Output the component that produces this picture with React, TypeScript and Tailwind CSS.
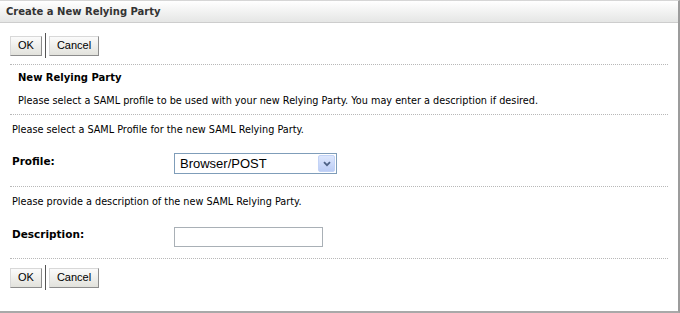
import React from 'react';

const font = { fontFamily: 'Tahoma, "DejaVu Sans", "Liberation Sans", sans-serif' };
const arial = { fontFamily: '"Liberation Sans", Arial, sans-serif' };

function ButtonBar() {
  return (
    <div className="flex items-center h-[25px] pl-[10px]" style={arial}>
      <button className="h-[20px] w-[32px] border border-[#8c8c8c] border-t-[#d8d8d8] border-l-[#d8d8d8] bg-gradient-to-b from-[#fbfbfb] to-[#e2e2dc] text-[11px] text-black leading-none">
        OK
      </button>
      <div className="w-px h-[25px] bg-[#555] mx-[3px]" />
      <button className="h-[20px] w-[50px] border border-[#8c8c8c] border-t-[#d8d8d8] border-l-[#d8d8d8] bg-gradient-to-b from-[#fbfbfb] to-[#e2e2dc] text-[11px] text-black leading-none">
        Cancel
      </button>
    </div>
  );
}

function Dotted() {
  return <div className="mx-[10px] border-t border-dotted border-[#b8b8b8]" />;
}

export default function App() {
  return (
    <div
      className="w-[680px] h-[313px] bg-white border-t border-t-[#d6d6d6] border-r-2 border-r-[#9c9c9c] border-b-2 border-b-[#a9a9a9] flex flex-col text-[9.7px] text-black"
      style={font}
    >
      <div className="h-[22px] shrink-0 bg-gradient-to-b from-white to-[#e5e6e5] border-b border-[#cdcdcd] flex items-center px-[6px] text-[10px] font-bold text-[#333]">
        Create a New Relying Party
      </div>

      <div className="pt-[10px]">
        <ButtonBar />
      </div>
      <div className="mt-[6px]">
        <Dotted />
      </div>

      <div className="h-[24px] flex items-center pl-[18px] font-bold text-[10px]">New Relying Party</div>
      <div className="h-[25px] flex items-center pl-[18px]">
        Please select a SAML profile to be used with your new Relying Party. You may enter a description if desired.
      </div>
      <Dotted />

      <div className="h-[31px] flex items-center pl-[12px]">
        Please select a SAML Profile for the new SAML Relying Party.
      </div>
      <div className="h-[40px] flex items-start pt-[7px]">
        <div className="w-[174px] pl-[12px] font-bold text-[10.5px] leading-[14px] pt-px">Profile:</div>
        <div className="w-[163px] h-[21px] border border-[#7f9db9] flex items-center justify-between pl-[5px] pr-px text-[13px]" style={arial}>
          <span>Browser/POST</span>
          <span className="w-[17px] h-[17px] rounded-[2px] bg-gradient-to-b from-[#dde7fd] to-[#bccdf5] border border-[#c3d3f6] flex items-center justify-center">
            <svg width="8" height="6" viewBox="0 0 8 6">
              <path d="M1 1.2 L4 4.2 L7 1.2" fill="none" stroke="#4d6185" strokeWidth="1.8" />
            </svg>
          </span>
        </div>
      </div>
      <Dotted />

      <div className="h-[30px] flex items-center pl-[12px]">
        Please provide a description of the new SAML Relying Party.
      </div>
      <div className="h-[41px] flex items-start pt-[10px]">
        <div className="w-[174px] pl-[12px] font-bold text-[10.5px] leading-[14px]">Description:</div>
        <input className="w-[149px] h-[20px] border border-[#a9b0b6] outline-none px-1" />
      </div>
      <Dotted />

      <div className="pt-[6px]">
        <ButtonBar />
      </div>
    </div>
  );
}
